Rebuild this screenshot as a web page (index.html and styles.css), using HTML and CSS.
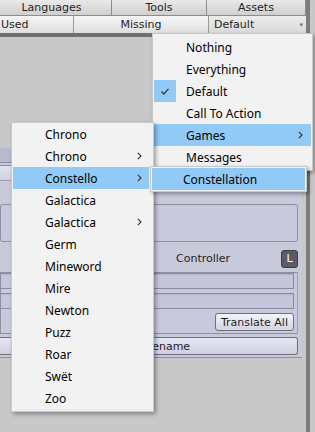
FILE: index.html
```html
<!DOCTYPE html>
<html lang="en">
  <head>
    <meta charset="UTF-8" />
    <meta name="viewport" content="width=device-width, initial-scale=1.0" />
    <title>Localization Editor</title>
    <link rel="stylesheet" href="styles.css">
  </head>
  <body>
    <div class="editor">
      <div class="tabs">
        <div class="tab tab-languages">Languages</div>
        <div class="tab tab-tools">Tools</div>
        <div class="tab tab-assets">Assets</div>
      </div>
      <div class="filters">
        <div class="filter filter-used">Used</div>
        <div class="filter filter-missing">Missing</div>
        <div class="filter filter-default">Default <span class="arrow">▾</span></div>
      </div>
      <div class="divider"></div>
      <div class="spacer"></div>

      <div class="panel">
        <div class="panel-head"></div>
        <div class="panel-toggle"></div>
        <div class="panel-blank"></div>
        <div class="panel-box"></div>
        <div class="controller-row">
          <span class="controller-label">Controller</span>
          <span class="badge">L</span>
        </div>
        <div class="group">
          <div class="field"></div>
          <div class="field"></div>
          <div class="group-actions">
            <button class="btn">Translate All</button>
          </div>
        </div>
        <button class="btn btn-wide">Rename</button>
      </div>
    </div>
    <div class="strip"></div>

    <!-- category dropdown -->
    <div class="menu menu-main">
      <div class="menu-item">Nothing</div>
      <div class="menu-item">Everything</div>
      <div class="menu-item">
        <span class="check">
          <svg width="8" height="7" viewBox="0 0 8 7"><polyline points="0.5,3.5 2.8,6 7.5,0.8" fill="none" stroke="#333" stroke-width="1.2" /></svg>
        </span>
        Default
      </div>
      <div class="menu-item">Call To Action</div>
      <div class="menu-item active">
        Games
        <svg class="chevron" width="5" height="8" viewBox="0 0 5 8"><polyline points="0.8,0.8 4,4 0.8,7.2" fill="none" stroke="#333" stroke-width="1.1" /></svg>
      </div>
      <div class="menu-item">Messages</div>
    </div>

    <!-- games submenu -->
    <div class="menu menu-games">
      <div class="menu-item">Chrono</div>
      <div class="menu-item">
        Chrono
        <svg class="chevron" width="5" height="8" viewBox="0 0 5 8"><polyline points="0.8,0.8 4,4 0.8,7.2" fill="none" stroke="#333" stroke-width="1.1" /></svg>
      </div>
      <div class="menu-item active">
        Constello
        <svg class="chevron" width="5" height="8" viewBox="0 0 5 8"><polyline points="0.8,0.8 4,4 0.8,7.2" fill="none" stroke="#333" stroke-width="1.1" /></svg>
      </div>
      <div class="menu-item">Galactica</div>
      <div class="menu-item">
        Galactica
        <svg class="chevron" width="5" height="8" viewBox="0 0 5 8"><polyline points="0.8,0.8 4,4 0.8,7.2" fill="none" stroke="#333" stroke-width="1.1" /></svg>
      </div>
      <div class="menu-item">Germ</div>
      <div class="menu-item">Mineword</div>
      <div class="menu-item">Mire</div>
      <div class="menu-item">Newton</div>
      <div class="menu-item">Puzz</div>
      <div class="menu-item">Roar</div>
      <div class="menu-item">Swët</div>
      <div class="menu-item">Zoo</div>
    </div>

    <!-- constello submenu -->
    <div class="menu menu-constello">
      <div class="menu-item active">Constellation</div>
    </div>
  </body>
</html>
```

FILE: styles.css
```css
body {
  margin: 0;
  width: 315px;
  height: 432px;
  overflow: hidden;
  position: relative;
  display: flex;
  background: #c8c8c8;
  font-family: "DejaVu Sans", sans-serif;
  font-size: 11px;
  color: #1e1e1e;
}

.editor {
  width: 306px;
  display: flex;
  flex-direction: column;
}

.strip {
  width: 4px;
  background: #7d7d7d;
}

/* top tabs */
.tabs {
  display: flex;
  height: 16px;
  margin-left: -8px;
}

.tab {
  box-sizing: border-box;
  display: flex;
  align-items: center;
  justify-content: center;
  background: linear-gradient(#e9e9e9, #cfcfcf);
  border-right: 1px solid #8c8c8c;
  border-bottom: 1px solid #8c8c8c;
  line-height: 1;
}

.tab-languages {
  width: 120px;
}

.tab-tools {
  width: 95px;
}

.tab-assets {
  width: 99px;
}

/* filter row */
.filters {
  display: flex;
  height: 17px;
}

.filter {
  box-sizing: border-box;
  display: flex;
  align-items: center;
  background: linear-gradient(#f5f5f5, #dfdfdf);
  border-right: 1px solid #9a9a9a;
}

.filter-used {
  width: 74px;
  padding-left: 1px;
}

.filter-missing {
  width: 135px;
  justify-content: center;
}

.filter-default {
  flex: 1;
  padding-left: 5px;
  background: linear-gradient(#ececec, #dadada);
  border-right: none;
  position: relative;
}

.filter-default .arrow {
  margin-left: auto;
  margin-right: 3px;
  font-size: 7px;
  color: #777;
}

.divider {
  height: 4px;
  background: #6f6f6f;
}

.spacer {
  height: 111px;
}

/* lavender inspector panel */
.panel {
  margin-right: 4px;
  background: #c9c9dc;
  border-bottom: 1px solid #8d8da3;
  padding-bottom: 2px;
  display: flex;
  flex-direction: column;
}

.panel-head {
  height: 14px;
  background: #b9b9cf;
  border-bottom: 1px solid #8a8aa2;
}

.panel-toggle {
  height: 14px;
  margin-top: 2px;
  background: linear-gradient(#e3e3ee, #d0d0e0);
  border-top: 1px solid #8a8aa2;
  border-bottom: 1px solid #9a9ab0;
}

.panel-blank {
  height: 23px;
}

.panel-box {
  height: 36px;
  margin-right: 4px;
  border: 1px solid #8e8ea4;
  border-radius: 3px;
}

.controller-row {
  box-sizing: border-box;
  height: 30px;
  display: flex;
  align-items: center;
  padding: 3px 4px 0 176px;
}

.badge {
  margin-left: auto;
  width: 15px;
  height: 16px;
  border-radius: 3px;
  background: #5b5b66;
  border: 1px solid #3f3f48;
  color: #fff;
  font-size: 11px;
  display: flex;
  align-items: center;
  justify-content: center;
}

.group {
  margin-right: 4px;
  border: 1px solid #8e8ea4;
  border-right-color: #a0a0b4;
  padding: 0 3px 2px 0;
  display: flex;
  flex-direction: column;
  gap: 4px;
}

.field {
  height: 14px;
  border: 1px solid #8a8aa0;
  border-left: none;
  background: #c6c6da;
  box-shadow: inset 0 1px 1px rgba(0, 0, 0, 0.08);
}

.group-actions {
  display: flex;
  justify-content: flex-end;
}

.btn {
  font-family: "DejaVu Sans", sans-serif;
  font-size: 11px;
  color: #1e1e1e;
  height: 18px;
  padding: 0 5px;
  border: 1px solid #6e6e7c;
  border-radius: 3px;
  background: linear-gradient(#f4f4fa, #d4d4e2);
}

.btn-wide {
  margin: 3px 4px 0 0;
  height: 18px;
  border-left: none;
  border-radius: 0 3px 3px 0;
  text-align: left;
  padding-left: 145px;
  background: linear-gradient(#e6e6f2, #cfcfe2);
}

/* popup menus */
.menu {
  position: absolute;
  box-sizing: border-box;
  background: #f2f2f2;
  border: 1px solid #c9c9c9;
  box-shadow: 2px 2px 4px rgba(0, 0, 0, 0.35);
  font-family: "Noto Sans", sans-serif;
  font-size: 12px;
  color: #000;
}

.menu-item {
  position: relative;
  height: 22px;
  display: flex;
  align-items: center;
  padding-left: 32px;
}

.menu-item.active {
  background: #91c9f7;
}

.check {
  position: absolute;
  left: 0;
  top: 0;
  width: 22px;
  height: 22px;
  background: #91c9f7;
  display: flex;
  align-items: center;
  justify-content: center;
}

.chevron {
  position: absolute;
  right: 8px;
  top: 7px;
}

.menu-main {
  left: 152px;
  top: 33px;
  width: 161px;
  padding: 2px 1px;
}

.menu-games {
  left: 11px;
  top: 122px;
  width: 143px;
  padding: 0 4px 2px 1px;
}

.menu-games .chevron {
  right: 7px;
}

.menu-constello {
  left: 150px;
  top: 166px;
  width: 157px;
  padding: 1px;
}

.menu-constello .menu-item {
  padding-left: 31px;
}
```
